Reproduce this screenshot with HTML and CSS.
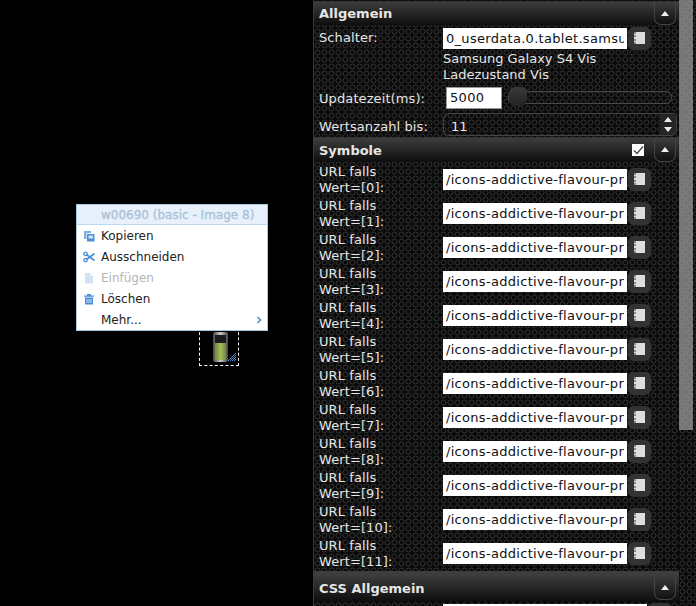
FILE: index.html
```html
<!DOCTYPE html>
<html lang="de">
<head>
    <meta charset="UTF-8">
    <title>vis edit</title>
    <link rel="stylesheet" href="styles.css">
</head>
<body>
    <div class="page">
        <div class="canvas">
            <div class="widget">
                <svg class="battery" width="26" height="32" viewBox="0 0 26 32">
                    <defs>
                        <linearGradient id="shell" x1="0" x2="1" y1="0" y2="0">
                            <stop offset="0" stop-color="#444"/>
                            <stop offset="0.5" stop-color="#ccc"/>
                            <stop offset="1" stop-color="#444"/>
                        </linearGradient>
                        <linearGradient id="charge" x1="0" x2="1" y1="0" y2="0">
                            <stop offset="0" stop-color="#6f8a35"/>
                            <stop offset="0.5" stop-color="#a8bd5c"/>
                            <stop offset="1" stop-color="#6f8a35"/>
                        </linearGradient>
                        <pattern id="dither" width="2" height="2" patternUnits="userSpaceOnUse">
                            <rect width="1" height="1" fill="#4a8fd8"/>
                            <rect x="1" y="1" width="1" height="1" fill="#4a8fd8"/>
                        </pattern>
                    </defs>
                    <rect x="1" y="0" width="15" height="30" rx="2" fill="url(#shell)"/>
                    <rect x="3" y="3" width="11" height="25" fill="#1c1c1c"/>
                    <rect x="3" y="11" width="11" height="17" fill="url(#charge)"/>
                    <path d="M15 29 L24 20 L24 29 Z" fill="url(#dither)"/>
                </svg>
            </div>
            <div class="menu">
                <div class="menu-title">w00690 (basic - Image 8)</div>
                <div class="menu-item">
                    <svg class="menu-icon" viewBox="0 0 12 12"><path d="M1 1h7v2H3.500v6H1z" fill="#7fb0e2"/><path d="M4 4h7.500v7.500H4z" fill="#4a90d9"/><path d="M5.500 5.500h4.500v3H5.500z" fill="#cfe2f6"/></svg>
                    <span>Kopieren</span>
                </div>
                <div class="menu-item">
                    <svg class="menu-icon" viewBox="0 0 12 12"><path d="M3.500 3.500l8 6M3.500 8.500l8-6" stroke="#4a90d9" stroke-width="1.700"/><circle cx="2.500" cy="2.800" r="1.700" fill="none" stroke="#4a90d9" stroke-width="1.300"/><circle cx="2.500" cy="9.200" r="1.700" fill="none" stroke="#4a90d9" stroke-width="1.300"/></svg>
                    <span>Ausschneiden</span>
                </div>
                <div class="menu-item disabled">
                    <svg class="menu-icon" viewBox="0 0 12 12"><path d="M2 1h5l3 3v7.500H2z" fill="#d3e3f3"/><path d="M7 1v3h3" fill="#eef4fb"/></svg>
                    <span>Einfügen</span>
                </div>
                <div class="menu-item">
                    <svg class="menu-icon" viewBox="0 0 12 12"><path d="M1 2.500h10v1.200H1zM4 1h4v1.500H4zM2 4.500h8V11.500H2z" fill="#4a90d9"/><path d="M4 6v4M6 6v4M8 6v4" stroke="#fff" stroke-width=".7"/></svg>
                    <span>Löschen</span>
                </div>
                <div class="menu-item">
                    <span class="menu-icon"></span>
                    <span>Mehr...</span>
                    <svg class="menu-arrow" viewBox="0 0 6 8"><path d="M1.500 1l3 3-3 3" fill="none" stroke="#4a90d9" stroke-width="1.500"/></svg>
                </div>
            </div>
        </div>

        <div class="panel">
            <div class="section-head first">
                <span class="section-title">Allgemein</span>
                <button class="collapse"><i class="up"></i></button>
            </div>
            <div class="row row-one">
                <label>Schalter:</label>
                <input class="text" type="text" value="0_userdata.0.tablet.samsung">
                <button class="pick"><i class="book"></i></button>
            </div>
            <div class="names">Samsung Galaxy S4 Vis<br>Ladezustand Vis</div>
            <div class="row row-time">
                <label>Updatezeit(ms):</label>
                <input class="text short" type="text" value="5000">
                <div class="slider"><div class="thumb"></div></div>
            </div>
            <div class="row row-spin">
                <label>Wertsanzahl bis:</label>
                <div class="spinner">
                    <span class="spin-value">11</span>
                    <div class="spin-arrows"><i class="up"></i><i class="down"></i></div>
                </div>
            </div>
            <div class="section-head">
                <span class="section-title">Symbole</span>
                <span class="check">
                    <svg width="12" height="12" viewBox="0 0 12 12"><path d="M2 6.500l3 3 6-7" fill="none" stroke="#444" stroke-width="1.300"/></svg>
                </span>
                <button class="collapse"><i class="up"></i></button>
            </div>
            <div id="icon-rows"></div>
            <div class="section-head lined">
                <span class="section-title">CSS Allgemein</span>
                <button class="collapse"><i class="up"></i></button>
            </div>
            <div class="row row-cut">
                <label></label>
                <input class="text wide" type="text">
                <button class="pick"></button>
            </div>
        </div>

        <div class="scrollbar"><div class="scroll-thumb"></div></div>
    </div>

    <script>
        const iconRows = document.getElementById('icon-rows');
        for (let i = 0; i < 12; i++) {
            const row = document.createElement('div');
            row.className = 'row row-icon';
            row.innerHTML = `
                <label>URL falls<br>Wert=[${i}]:</label>
                <input class="text" type="text" value="/icons-addictive-flavour-png/battery/battery_${i}.png">
                <button class="pick"><i class="book"></i></button>
            `;
            iconRows.appendChild(row);
        }
    </script>
</body>
</html>
```

FILE: styles.css
```css
html, body {
    margin: 0;
    height: 100%;
    background: #000;
    overflow: hidden;
}

body {
    font-family: "DejaVu Sans", Verdana, sans-serif;
    font-size: 13px;
    color: #e6e6e6;
}

.page {
    display: flex;
    height: 606px;
}

.canvas {
    position: relative;
    width: 313px;
    flex: none;
}

.widget {
    position: absolute;
    left: 199px;
    top: 327px;
    width: 38px;
    height: 37px;
    border: 1px dashed #fff;
}

.battery {
    position: absolute;
    left: 12px;
    top: 4px;
}

.menu {
    position: absolute;
    left: 76px;
    top: 204px;
    width: 190px;
    border: 1px solid #a6c9e2;
    background: #fff;
    color: #222;
    font-size: 12px;
}

.menu-title {
    height: 19px;
    line-height: 20px;
    padding-left: 24px;
    background: #e8f1fb;
    border-bottom: 1px solid #bcd9f0;
    color: #a9c2d8;
    white-space: nowrap;
    -webkit-text-stroke: 0.3px #a9c2d8;
}

.menu-item {
    display: flex;
    align-items: center;
    height: 21px;
    padding-left: 6px;
}

.menu-icon {
    width: 12px;
    height: 12px;
    margin-right: 6px;
    flex: none;
}

.menu-arrow {
    width: 6px;
    height: 8px;
    margin-left: auto;
    margin-right: 5px;
}

.disabled {
    color: #b5b5b5;
}

.panel, .scrollbar {
    background-color: #0a0a0a;
    background-image: url("data:image/svg+xml,%3Csvg xmlns='http://www.w3.org/2000/svg' width='7' height='7'%3E%3Ccircle cx='3.5' cy='3.5' r='2.5' fill='none' stroke='%23333'/%3E%3C/svg%3E");
    background-size: 7px 7px;
}

.panel {
    width: 366px;
    flex: none;
    height: 606px;
    overflow: hidden;
    border-left: 1px solid #3a3a3a;
    box-sizing: border-box;
}

.section-head {
    display: flex;
    align-items: center;
    height: 25px;
    padding-left: 5px;
    padding-right: 3px;
    border-top: 1px solid #333;
    box-sizing: border-box;
    background: linear-gradient(#3d3d3d, #0e0e0e);
}

.section-head.first {
    margin-top: 1px;
    height: 24px;
}

.section-head.lined {
    border-top: 4px solid #3e3e3e;
    margin-top: 1px;
    height: 30px;
}

.section-title {
    font-weight: bold;
    font-size: 13px;
    color: #e6e6e6;
    flex: 1;
}

.check {
    display: flex;
    align-items: center;
    justify-content: center;
    width: 12px;
    height: 12px;
    background: #fff;
    margin-right: 10px;
}

.collapse {
    width: 22px;
    height: 23px;
    padding: 0;
    margin: 0;
    border: 1px solid #444;
    border-top: none;
    border-radius: 0 0 7px 7px;
    background: transparent;
    display: flex;
    align-items: center;
    justify-content: center;
}

.up {
    display: block;
    width: 0;
    height: 0;
    border-left: 4px solid transparent;
    border-right: 4px solid transparent;
    border-bottom: 5px solid #eee;
}

.down {
    display: block;
    width: 0;
    height: 0;
    border-left: 4px solid transparent;
    border-right: 4px solid transparent;
    border-top: 5px solid #eee;
}

.row {
    display: flex;
    align-items: center;
    padding-left: 5px;
    letter-spacing: 0.1px;
}

.row label {
    width: 124px;
    flex: none;
    line-height: 16px;
    padding-top: 2px;
}

.row-one {
    height: 26px;
}

.row-one label {
    padding-top: 0;
}

.row-icon {
    height: 34px;
}

.names {
    padding-left: 129px;
    line-height: 16px;
}

.text {
    width: 184px;
    height: 21px;
    box-sizing: border-box;
    padding: 0 3px;
    border: none;
    background: #fff;
    color: #111;
    font-family: "DejaVu Sans", Verdana, sans-serif;
    font-size: 13px;
    letter-spacing: 0.3px;
    flex: none;
}

.pick {
    width: 23px;
    height: 23px;
    padding: 0;
    margin-left: 1px;
    border: none;
    border-radius: 6px;
    background: #333;
    display: flex;
    align-items: center;
    justify-content: center;
}

.book {
    display: block;
    width: 9px;
    height: 12px;
    background: #ddd;
    border-left: 2px dotted #888;
}

.row-time {
    height: 25px;
    margin-top: 2px;
}

.short {
    width: 56px;
    height: 22px;
    margin-left: 3px;
    border: 1px solid #999;
}

.slider {
    position: relative;
    width: 162px;
    height: 11px;
    margin-left: 6px;
    border: 1px solid #4a4a4a;
    border-radius: 6px;
}

.thumb {
    position: absolute;
    left: 0;
    top: -5px;
    width: 18px;
    height: 19px;
    border-radius: 6px;
    background: linear-gradient(#3a3a3a, #222);
}

.row-spin {
    height: 25px;
    margin-top: 2px;
}

.row-spin label {
    padding-top: 5px;
}

.spinner {
    display: flex;
    align-items: center;
    justify-content: space-between;
    width: 234px;
    height: 23px;
    box-sizing: border-box;
    padding-left: 7px;
    border: 1px solid #444;
    border-radius: 6px;
}

.spin-value {
    padding-top: 3px;
}

.spin-arrows {
    display: flex;
    flex-direction: column;
    align-items: center;
    justify-content: space-around;
    width: 16px;
    height: 100%;
    background: #262626;
    border-radius: 0 6px 6px 0;
}

.wide {
    width: 204px;
}

.row-cut {
    height: 26px;
}

.scrollbar {
    flex: 1;
}

.scroll-thumb {
    width: 14px;
    height: 430px;
    background-color: #747474;
    background-image: url("data:image/svg+xml,%3Csvg xmlns='http://www.w3.org/2000/svg' width='7' height='7'%3E%3Ccircle cx='3.5' cy='3.5' r='2.5' fill='none' stroke='%23808080'/%3E%3C/svg%3E");
    background-size: 7px 7px;
}
```
